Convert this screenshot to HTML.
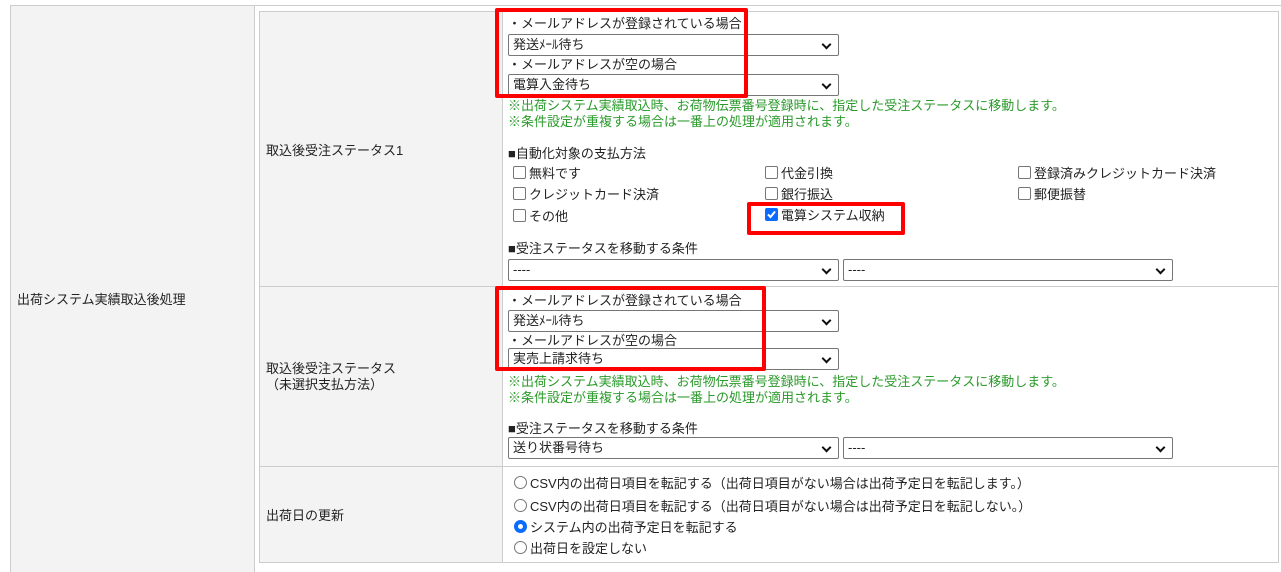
<!DOCTYPE html>
<html><head><meta charset="utf-8"><style>
body{margin:0;width:1281px;height:572px;background:#fff;font-family:"Liberation Sans","Noto Sans CJK JP",sans-serif;font-size:13px;color:#222;position:relative;overflow:hidden}
.a{position:absolute;white-space:nowrap;line-height:16px;margin-top:2px}
.sel{position:absolute;height:22px;border:1px solid #767676;border-radius:2px;background:#fff;box-sizing:border-box;width:331px;font-size:13px;line-height:20px;padding-left:4px}
.sel:after{content:"";position:absolute;right:8px;top:6px;width:5px;height:5px;border-right:2px solid #111;border-bottom:2px solid #111;transform:rotate(45deg)}
.g{color:#2a9a2a}
.cb{display:inline-block;width:11px;height:11px;border:1px solid #767676;border-radius:2px;vertical-align:-1px;margin-right:3px;background:#fff}
.rd{display:inline-block;width:11px;height:11px;border:1px solid #767676;border-radius:50%;vertical-align:-1px;margin-right:3px;background:#fff;box-sizing:content-box}
.red{position:absolute;border:4px solid #f00;border-radius:2px;box-sizing:border-box}
</style></head><body>
<div style="position:absolute;left:10px;top:5px;width:1271px;height:1px;background:#ccc"></div>
<div style="position:absolute;left:10px;top:6px;width:243px;height:566px;background:#f2f3f2;border-left:1px solid #ccc;border-right:1px solid #ccc"></div>
<div style="position:absolute;left:259px;top:11px;width:243px;height:551px;background:#f2f3f2"></div>
<div style="position:absolute;left:259px;top:11px;width:1018px;height:550px;border:1px solid #ccc"></div>
<div style="position:absolute;left:502px;top:11px;width:1px;height:551px;background:#ccc"></div>
<div style="position:absolute;left:259px;top:286px;width:1019px;height:1px;background:#ccc"></div>
<div style="position:absolute;left:259px;top:466px;width:1019px;height:1px;background:#ccc"></div>

<div class="a" style="left:17px;top:290px">出荷システム実績取込後処理</div>
<div class="a" style="left:266px;top:141px">取込後受注ステータス1</div>
<div class="a" style="left:266px;top:359px">取込後受注ステータス<br>（未選択支払方法）</div>
<div class="a" style="left:266px;top:506px">出荷日の更新</div>

<div class="a" style="left:508px;top:14px">・メールアドレスが登録されている場合</div>
<div class="sel" style="left:508px;top:34px">発送ﾒｰﾙ待ち</div>
<div class="a" style="left:508px;top:55px">・メールアドレスが空の場合</div>
<div class="sel" style="left:508px;top:74px">電算入金待ち</div>
<div class="a g" style="left:508px;top:96px">※出荷システム実績取込時、お荷物伝票番号登録時に、指定した受注ステータスに移動します。</div>
<div class="a g" style="left:508px;top:112px">※条件設定が重複する場合は一番上の処理が適用されます。</div>
<div class="a" style="left:508px;top:144px">■自動化対象の支払方法</div>
<div class="a" style="left:513px;top:164px"><span class="cb"></span>無料です</div>
<div class="a" style="left:765px;top:164px"><span class="cb"></span>代金引換</div>
<div class="a" style="left:1018px;top:164px"><span class="cb"></span>登録済みクレジットカード決済</div>
<div class="a" style="left:513px;top:185px"><span class="cb"></span>クレジットカード決済</div>
<div class="a" style="left:765px;top:185px"><span class="cb"></span>銀行振込</div>
<div class="a" style="left:1018px;top:185px"><span class="cb"></span>郵便振替</div>
<div class="a" style="left:513px;top:207px"><span class="cb"></span>その他</div>
<div class="a" style="left:765px;top:206px"><span class="cb" style="background:#0a6cff;border-color:#0a6cff;position:relative"><svg width="11" height="11" style="position:absolute;left:0;top:0"><path d="M2 5.5L4.5 8L9 2.5" stroke="#fff" stroke-width="2" fill="none"/></svg></span>電算システム収納</div>
<div class="a" style="left:508px;top:239px">■受注ステータスを移動する条件</div>
<div class="sel" style="left:508px;top:259px">----</div>
<div class="sel" style="left:843px;top:259px;width:330px">----</div>

<div class="a" style="left:508px;top:291px">・メールアドレスが登録されている場合</div>
<div class="sel" style="left:508px;top:310px">発送ﾒｰﾙ待ち</div>
<div class="a" style="left:508px;top:331px">・メールアドレスが空の場合</div>
<div class="sel" style="left:508px;top:348px">実売上請求待ち</div>
<div class="a g" style="left:508px;top:372px">※出荷システム実績取込時、お荷物伝票番号登録時に、指定した受注ステータスに移動します。</div>
<div class="a g" style="left:508px;top:388px">※条件設定が重複する場合は一番上の処理が適用されます。</div>
<div class="a" style="left:508px;top:419px">■受注ステータスを移動する条件</div>
<div class="sel" style="left:508px;top:437px">送り状番号待ち</div>
<div class="sel" style="left:843px;top:437px;width:330px">----</div>

<div class="a" style="left:514px;top:474px"><span class="rd"></span>CSV内の出荷日項目を転記する（出荷日項目がない場合は出荷予定日を転記します。）</div>
<div class="a" style="left:514px;top:497px"><span class="rd"></span>CSV内の出荷日項目を転記する（出荷日項目がない場合は出荷予定日を転記しない。）</div>
<div class="a" style="left:514px;top:518px"><span class="rd" style="border:4px solid #0a6cff;width:5px;height:5px;background:#fff"></span>システム内の出荷予定日を転記する</div>
<div class="a" style="left:514px;top:539px"><span class="rd"></span>出荷日を設定しない</div>

<div class="red" style="left:495px;top:8px;width:253px;height:90px"></div>
<div class="red" style="left:747px;top:202px;width:158px;height:33px"></div>
<div class="red" style="left:495px;top:286px;width:271px;height:85px"></div>
</body></html>
